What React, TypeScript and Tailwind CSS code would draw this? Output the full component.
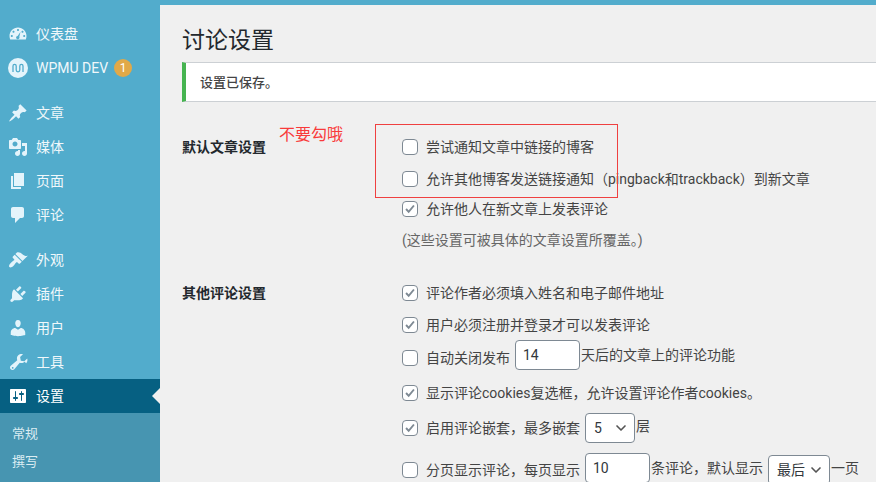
import { ChevronDown } from "lucide-react";

const cjk = "font-['Roboto','Noto_Sans_CJK_SC',sans-serif]";

const paths = {
  post: "M10.44 3.02l1.82-1.82 6.36 6.35-1.83 1.82c-1.05-.68-2.48-.57-3.41.36l-.75.75c-.92.93-1.04 2.35-.35 3.41l-1.83 1.82-2.41-2.41-2.8 2.79c-.42.42-3.38 2.71-3.8 2.29s1.86-3.39 2.28-3.81l2.79-2.79L4.1 9.36l1.83-1.82c1.05.69 2.48.57 3.4-.36l.75-.75c.93-.92 1.05-2.35.36-3.41z",
  dashboard:
    "M2.2 15.5C1.8 14.4 1.5 13.2 1.5 12 1.5 7.3 5.3 3.5 10 3.5s8.5 3.8 8.5 8.5c0 1.2-.3 2.4-.7 3.5H2.2zM10 5c-.6 0-1 .4-1 1s.4 1 1 1 1-.4 1-1-.4-1-1-1zM5.5 6.8c-.6 0-1 .4-1 1s.4 1 1 1 1-.4 1-1-.4-1-1-1zM14.5 6.8c-.6 0-1 .4-1 1s.4 1 1 1 1-.4 1-1-.4-1-1-1zM3.8 11c-.6 0-1 .4-1 1s.4 1 1 1 1-.4 1-1-.4-1-1-1zM16.2 11c-.6 0-1 .4-1 1s.4 1 1 1 1-.4 1-1-.4-1-1-1zM12.6 7.8l-3 4.2c-.9.1-1.5.8-1.5 1.6 0 .9.8 1.6 1.7 1.6s1.7-.7 1.7-1.6c0-.3-.1-.6-.2-.8l1.2-4.8z",
  media:
    "M13 11V4c0-.55-.45-1-1-1h-1.67L9 1H5L3.67 3H2c-.55 0-1 .45-1 1v7c0 .55.45 1 1 1h10c.55 0 1-.45 1-1zM7 4.5c1.38 0 2.5 1.12 2.5 2.5S8.38 9.5 7 9.5 4.5 8.38 4.5 7 5.62 4.5 7 4.5zM14 6h5v10.5c0 1.38-1.12 2.5-2.5 2.5S14 17.88 14 16.5s1.12-2.5 2.5-2.5c.17 0 .34.02.5.05V9h-3V6zm-4 8.05V13h2v3.5c0 1.38-1.12 2.5-2.5 2.5S7 17.88 7 16.5 8.12 14 9.5 14c.17 0 .34.02.5.05z",
  page: "M6 15V2h10v13H6zm-1 1h8v2H3V5h2v11z",
  comments:
    "M5 2h9c1.1 0 2 .9 2 2v7c0 1.1-.9 2-2 2h-2l-5 5v-5H5c-1.1 0-2-.9-2-2V4c0-1.1.9-2 2-2z",
  appearance:
    "M14.48 11.06L7.41 3.99l1.5-1.5c.5-.56 2.3-.47 3.51.32 1.21.8 1.43 1.28 2.91 2.1 1.18.64 2.45 1.26 4.45.85zm-.71.71L6.7 4.7 4.93 6.47c-.39.39-.39 1.02 0 1.41l1.06 1.06c.39.39.39 1.03 0 1.42-.6.6-1.43 1.11-2.21 1.69-.35.26-.7.53-1.01.84C1.43 14.23.4 16.08 1.4 17.07c.99 1 2.84-.03 4.18-1.36.31-.31.58-.66.85-1.02.57-.78 1.08-1.6 1.69-2.21.39-.39 1.02-.39 1.41 0l1.06 1.06c.39.39 1.02.39 1.41 0z",
  plugins:
    "M13.11 4.36L9.87 7.6 8 5.73l3.24-3.24c.35-.34 1.05-.2 1.56.32.52.51.66 1.21.31 1.55zm-8 1.77l.91-.91 9.01 9.01-.91.91c-.71.71-2.63 1.16-3.82 1.16H6.14L4.9 17.54c-.59.59-1.54.59-2.12 0-.59-.58-.59-1.53 0-2.12l1.24-1.24v-3.88c0-1.13.4-3.5 1.09-4.17zm7.26 3.97l3.24-3.24c.34-.35 1.04-.21 1.55.31.52.51.66 1.21.31 1.55l-3.24 3.25z",
  users:
    "M10 9.25c-2.27 0-2.73-3.44-2.73-3.44C7 4.02 7.82 2 9.97 2c2.16 0 2.98 2.02 2.71 3.81 0 0-.41 3.44-2.68 3.44zm0 2.57L12.72 10c2.39 0 4.52 2.33 4.52 4.53v2.49s-3.65 1.13-7.24 1.13c-3.65 0-7.24-1.13-7.24-1.13v-2.49c0-2.25 1.94-4.48 4.47-4.48z",
  tools:
    "M16.68 9.77c-1.34 1.34-3.3 1.67-4.95.99l-5.41 6.52c-.99.99-2.59.99-3.57 0-.99-.98-.99-2.58 0-3.57l6.52-5.42c-.68-1.65-.35-3.61.99-4.95 1.28-1.28 3.12-1.64 4.72-1.1l-2.87 2.87.71 3.53 3.53.71 2.87-2.87c.54 1.6.18 3.44-1.1 4.72zM4.04 15.21c-.36.36-.36.94 0 1.3.37.37.95.37 1.31 0 .36-.36.36-.94 0-1.3-.36-.37-.94-.37-1.31 0z",
  settings:
    "M18 16V4c0-.55-.45-1-1-1H3c-.55 0-1 .45-1 1v12c0 .55.45 1 1 1h14c.55 0 1-.45 1-1zM8 11h1c.55 0 1 .45 1 1s-.45 1-1 1H8v1.5c0 .28-.22.5-.5.5s-.5-.22-.5-.5V13H6c-.55 0-1-.45-1-1s.45-1 1-1h1V5.5c0-.28.22-.5.5-.5s.5.22.5.5V11zm5-2h-1c-.55 0-1-.45-1-1s.45-1 1-1h1V5.5c0-.28.22-.5.5-.5s.5.22.5.5V7h1c.55 0 1 .45 1 1s-.45 1-1 1h-1v5.5c0 .28-.22.5-.5.5s-.5-.22-.5-.5V9z",
};

function DashIcon({ name, active }: { name: keyof typeof paths; active?: boolean }) {
  return (
    <svg
      viewBox="0 0 20 20"
      className={`h-5 w-5 shrink-0 ${active ? "text-white" : "text-[#e4f4fb]"}`}
      fill="currentColor"
      fillRule="evenodd"
    >
      <path d={paths[name]} />
    </svg>
  );
}

function MenuItem({ name, label, active }: { name: keyof typeof paths; label: string; active?: boolean }) {
  return (
    <div
      className={`relative flex h-[34px] items-center gap-2 pl-2 text-sm ${
        active ? "bg-[#066082] text-white" : "text-[#f0f8fb]"
      }`}
    >
      <DashIcon name={name} active={active} />
      <span>{label}</span>
      {active && (
        <span className="absolute right-0 top-[9px] h-0 w-0 border-y-[8px] border-r-[8px] border-y-transparent border-r-[#f0f0f0]" />
      )}
    </div>
  );
}

function Box({ checked }: { checked?: boolean }) {
  return (
    <span className="mr-2 flex h-4 w-4 shrink-0 items-center justify-center rounded-[4px] border border-[#7e8993] bg-white">
      {checked && (
        <svg viewBox="0 0 16 16" className="h-[14px] w-[14px]" fill="none" stroke="#7e8993" strokeWidth="2.2">
          <path d="M3.5 8l3 3.2L12.5 4" />
        </svg>
      )}
    </span>
  );
}

function Row({ checked, className, children }: { checked?: boolean; className: string; children: React.ReactNode }) {
  return (
    <div className={`flex items-center whitespace-nowrap text-sm text-[#444] ${className}`}>
      <Box checked={checked} />
      {children}
    </div>
  );
}

function NumInput({ value, className }: { value: string; className: string }) {
  return (
    <span className={`flex h-[30px] shrink-0 items-center rounded-[4px] border border-[#7e8993] bg-white pl-[7px] text-sm text-[#32373c] ${className}`}>
      {value}
    </span>
  );
}

function SelectBox({ value, className }: { value: string; className: string }) {
  return (
    <span className={`flex h-[30px] shrink-0 items-center justify-between rounded-[4px] border border-[#7e8993] bg-white pl-[8px] pr-[5px] text-sm text-[#32373c] ${className}`}>
      {value}
      <ChevronDown size={16} strokeWidth={2.5} className="text-[#555]" />
    </span>
  );
}

export default function App() {
  return (
    <div className={`flex h-[482px] w-[876px] flex-col overflow-hidden bg-[#f0f0f0] ${cjk}`}>
      <div className="h-[5px] shrink-0 bg-[#52accc]" />
      <div className="flex min-h-0 flex-1">
        <aside className="flex w-[160px] shrink-0 flex-col bg-[#52accc] pt-[12px]">
          <MenuItem name="dashboard" label="仪表盘" />
          <div className="flex h-[34px] items-center gap-2 pl-2 text-sm text-[#f0f8fb]">
            <svg viewBox="0 0 20 20" className="h-5 w-5 shrink-0">
              <circle cx="10" cy="10" r="10" fill="#e4f4fb" />
              <path
                d="M5 14V8a1.6 1.6 0 0 1 3.2 0v4a1.8 1.8 0 0 0 3.6 0V8a1.6 1.6 0 0 1 3.2 0v6"
                fill="none"
                stroke="#52accc"
                strokeWidth="1.3"
              />
            </svg>
            <span>WPMU DEV</span>
            <span className="ml-[-2px] flex h-[18px] w-[18px] items-center justify-center rounded-full bg-[#e1a948] text-xs text-white">
              1
            </span>
          </div>
          <div className="h-[11px]" />
          <MenuItem name="post" label="文章" />
          <MenuItem name="media" label="媒体" />
          <MenuItem name="page" label="页面" />
          <MenuItem name="comments" label="评论" />
          <div className="h-[11px]" />
          <MenuItem name="appearance" label="外观" />
          <MenuItem name="plugins" label="插件" />
          <MenuItem name="users" label="用户" />
          <MenuItem name="tools" label="工具" />
          <MenuItem name="settings" label="设置" active />
          <div className="flex flex-1 flex-col gap-[6px] bg-[#4795b1] pl-3 pt-[10px] text-[13px] text-[#dcedf3]">
            <span className="leading-[22px]">常规</span>
            <span className="leading-[22px]">撰写</span>
          </div>
        </aside>

        <main className="relative min-w-0 flex-1 pl-[22px]">
          <h1 className="pt-[19px] text-[23px] leading-[34px] text-[#23282d]">讨论设置</h1>
          <div className="mt-[4px] flex h-[40px] items-center border-y border-l-4 border-y-[#ccd0d4] border-l-[#46b450] bg-white pl-[14px] pt-[2px] text-[13px] font-medium text-[#444]">
            设置已保存。
          </div>

          <span className="absolute left-[119px] top-[118px] text-base leading-[24px] text-[#f93a3a]">不要勾哦</span>
          <div className="absolute left-[215px] top-[119px] h-[74px] w-[243px] border border-[#ef4040]" />

          <section className="mt-[29px] flex">
            <h2 className="w-[220px] pt-[5px] text-sm font-bold leading-[22px] text-[#23282d]">默认文章设置</h2>
            <div className="flex flex-col">
              <Row className="h-[32px]">尝试通知文章中链接的博客</Row>
              <Row className="h-[31px]">允许其他博客发送链接通知（pingback和trackback）到新文章</Row>
              <Row checked className="h-[30px]">允许他人在新文章上发表评论</Row>
              <p className="mt-[5px] text-sm leading-[22px] text-[#666]">(这些设置可被具体的文章设置所覆盖。)</p>
            </div>
          </section>

          <section className="mt-[26px] flex">
            <h2 className="w-[220px] pt-[5px] text-sm font-bold leading-[22px] text-[#23282d]">其他评论设置</h2>
            <div className="flex flex-col">
              <Row checked className="h-[32px]">评论作者必须填入姓名和电子邮件地址</Row>
              <Row checked className="h-[31px]">用户必须注册并登录才可以发表评论</Row>
              <Row className="h-[35px]">
                自动关闭发布
                <NumInput value="14" className="mb-[6px] ml-[5px] w-[65px]" />
                <span className="mb-[6px] ml-[1px]">天后的文章上的评论功能</span>
              </Row>
              <Row checked className="h-[36px]">显示评论cookies复选框，允许设置评论作者cookies。</Row>
              <Row checked className="h-[34px]">
                启用评论嵌套，最多嵌套
                <SelectBox value="5" className="ml-[5px] w-[50px]" />
                <span className="mb-[4px] ml-[1px]">层</span>
              </Row>
              <Row className="h-[50px]">
                分页显示评论，每页显示
                <NumInput value="10" className="mb-[4px] ml-[5px] w-[65px]" />
                <span className="mb-[4px] ml-[1px]">条评论，默认显示</span>
                <SelectBox value="最后" className="ml-[5px] w-[62px]" />
                <span className="mb-[4px] ml-[1px]">一页</span>
              </Row>
            </div>
          </section>
        </main>
      </div>
    </div>
  );
}
